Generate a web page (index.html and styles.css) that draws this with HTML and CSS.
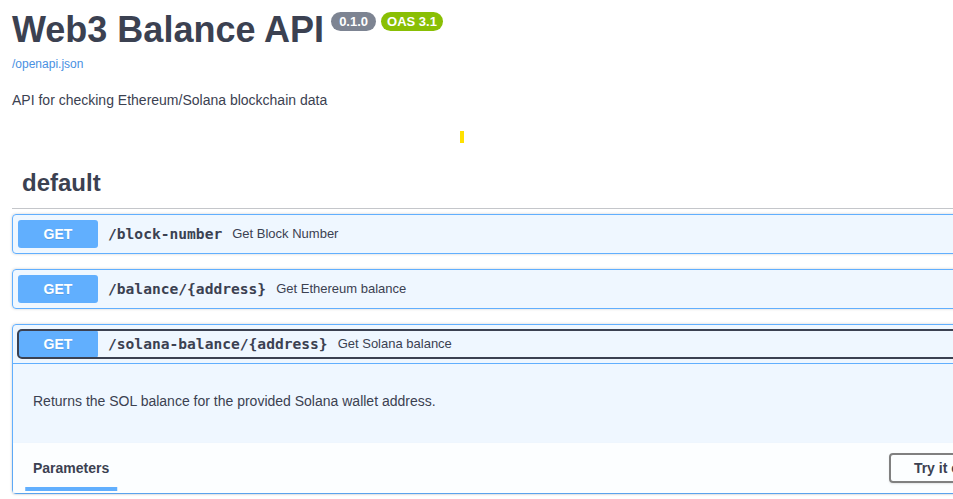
FILE: index.html
```html
<!DOCTYPE html>
<html lang="en">
<head>
<meta charset="utf-8">
<title>Web3 Balance API</title>
<link rel="stylesheet" href="styles.css">
</head>
<body>
<div class="wrapper">
  <div class="info">
    <h2 class="title">Web3 Balance API<span class="badge badge-version">0.1.0</span><span class="badge badge-oas">OAS 3.1</span></h2>
    <a class="spec-link" href="#">/openapi.json</a>
    <p class="description">API for checking Ethereum/Solana blockchain data</p>
    <div class="caret"></div>
  </div>

  <h3 class="tag">default</h3>

  <div class="opblock">
    <div class="summary">
      <div class="control">
        <span class="method">GET</span>
        <span class="path">/block-number</span>
        <span class="summary-desc">Get Block Number</span>
      </div>
    </div>
  </div>

  <div class="opblock">
    <div class="summary">
      <div class="control">
        <span class="method">GET</span>
        <span class="path">/balance/{address}</span>
        <span class="summary-desc">Get Ethereum balance</span>
      </div>
    </div>
  </div>

  <div class="opblock is-open">
    <div class="summary">
      <div class="control focused">
        <span class="method">GET</span>
        <span class="path">/solana-balance/{address}</span>
        <span class="summary-desc">Get Solana balance</span>
      </div>
    </div>
    <div class="op-body">
      <div class="op-description">
        <p>Returns the SOL balance for the provided Solana wallet address.</p>
      </div>
      <div class="section-header">
        <h4 class="tab-title"><span>Parameters</span></h4>
        <button class="try-out">Try it out</button>
      </div>
    </div>
  </div>
</div>
</body>
</html>
```

FILE: styles.css
```css
html, body {
  margin: 0;
  padding: 0;
  overflow: hidden;
  background: #fff;
}

body {
  font-family: "Liberation Sans", Arial, sans-serif;
  color: #3b4151;
}

.wrapper {
  width: 1007px;
  margin-left: 12px;
}

.info {
  display: flex;
  flex-direction: column;
  align-items: flex-start;
}

.title {
  margin: 8px 0 0;
  font-size: 36px;
  line-height: 44px;
  font-weight: 700;
  color: #3b4151;
  display: flex;
  align-items: flex-start;
}

.badge {
  display: inline-block;
  margin-top: 4px;
  margin-left: 5px;
  padding: 2px 6px;
  border-radius: 57px;
  font-size: 13px;
  line-height: 15px;
  font-weight: 700;
  color: #fff;
}

.badge-version {
  background: #7d8492;
  margin-left: 7px;
  padding: 2px 8px;
}

.badge-oas {
  background: #89bf04;
}

.spec-link {
  margin-top: 5px;
  font-size: 12px;
  line-height: 14px;
  color: #4990e2;
  text-decoration: none;
}

.description {
  margin: 21px 0 0;
  font-size: 14px;
  line-height: 16px;
  color: #3b4151;
}

.caret {
  width: 4px;
  height: 12px;
  margin: 23px 0 0 448px;
  background: #ffe100;
}

.tag {
  margin: 16px 0 5px;
  padding: 10px 20px 11px 10px;
  font-size: 24px;
  line-height: 28px;
  font-weight: 700;
  color: #3b4151;
  border-bottom: 1px solid rgba(59, 65, 81, 0.3);
}

.opblock {
  margin: 0 0 15px;
  border: 1px solid #61affe;
  border-radius: 4px;
  background: rgba(97, 175, 254, 0.1);
  box-shadow: 0 0 3px rgba(0, 0, 0, 0.19);
}

.summary {
  padding: 5px;
}

.is-open .summary {
  border-bottom: 1px solid #61affe;
}

.control {
  display: flex;
  align-items: center;
  border-radius: 4px;
}

.control.focused {
  outline: 2px solid #3b4151;
  outline-offset: -1px;
}

.method {
  min-width: 80px;
  padding: 6px 0;
  border-radius: 3px;
  background: #61affe;
  color: #fff;
  font-size: 14px;
  line-height: 16px;
  font-weight: 700;
  text-align: center;
  text-shadow: 0 1px 0 rgba(0, 0, 0, 0.1);
}

.path {
  padding: 0 10px 2px;
  font-family: "DejaVu Sans Mono", "Liberation Mono", monospace;
  font-size: 14.6px;
  font-weight: 700;
  color: #3b4151;
  white-space: nowrap;
}

.summary-desc {
  padding-bottom: 2px;
  font-size: 13px;
  color: #3b4151;
}

.op-description {
  padding: 15px 20px;
  margin-bottom: 5px;
}

.op-description p {
  margin: 14px 0;
  font-size: 14px;
  line-height: 16px;
  color: #3b4151;
}

.section-header {
  display: flex;
  align-items: center;
  justify-content: space-between;
  min-height: 50px;
  padding: 0 20px;
  box-sizing: border-box;
  background: rgba(255, 255, 255, 0.8);
  box-shadow: 0 1px 2px rgba(0, 0, 0, 0.1);
}

.tab-title {
  margin: 0;
  font-size: 14px;
  line-height: 16px;
  font-weight: 700;
  color: #3b4151;
}

.tab-title span {
  position: relative;
  display: inline-block;
}

.tab-title span::after {
  content: "";
  position: absolute;
  left: 50%;
  bottom: -15px;
  width: 120%;
  height: 4px;
  transform: translateX(-50%);
  background: #61affe;
}

.try-out {
  padding: 5px 23px;
  border: 2px solid #808080;
  border-radius: 4px;
  background: transparent;
  font-family: "Liberation Sans", Arial, sans-serif;
  font-size: 14px;
  line-height: 16px;
  font-weight: 700;
  color: #3b4151;
  box-shadow: 0 1px 2px rgba(0, 0, 0, 0.1);
}
```
